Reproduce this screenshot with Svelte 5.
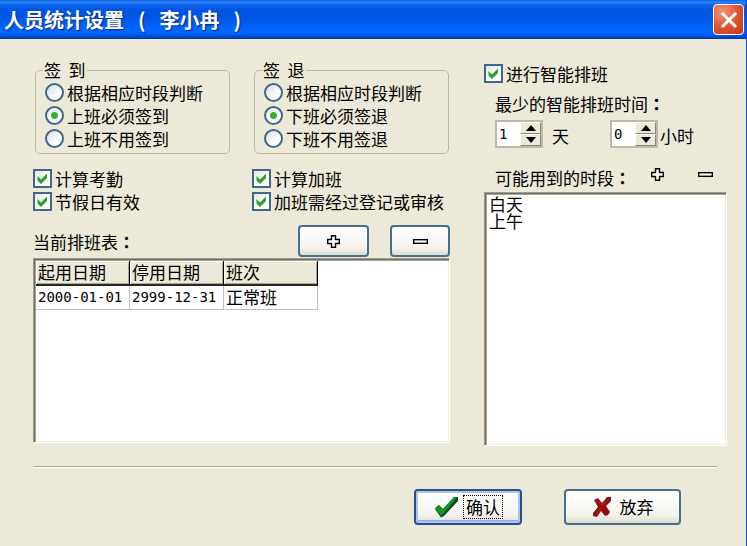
<script lang="ts">
  type Shift = { start: string; end: string; name: string };

  const IN_OPTIONS = ['根据相应时段判断', '上班必须签到', '上班不用签到'];
  const OUT_OPTIONS = ['根据相应时段判断', '下班必须签退', '下班不用签退'];
  const PERIODS = ['白天', '上午'];

  let person = '李小冉';
  let signIn = $state(1);
  let signOut = $state(1);
  let smart = $state(true);
  let days = $state(1);
  let hours = $state(0);

  let flags = $state([
    { label: '计算考勤', on: true },
    { label: '计算加班', on: true },
    { label: '节假日有效', on: true },
    { label: '加班需经过登记或审核', on: true },
  ]);

  let shifts: Shift[] = $state([{ start: '2000-01-01', end: '2999-12-31', name: '正常班' }]);

  function addShift() {
    shifts.push({ start: '2000-01-01', end: '2999-12-31', name: '正常班' });
  }

  function removeShift() {
    shifts.pop();
  }
</script>

{#snippet tick()}
  <svg class="tick" viewBox="0 0 19 19" aria-hidden="true">
    <path d="M4.5 7 L8 10.5 L14 4.5 V9 L8 15 L4.5 11.5 Z" fill="#2ba12b" />
  </svg>
{/snippet}

{#snippet plus()}
  <svg width="13" height="13" viewBox="0 0 13 13" aria-hidden="true">
    <path d="M4.5 .7 H8.5 V4.5 H12.3 V8.5 H8.5 V12.3 H4.5 V8.5 H.7 V4.5 H4.5 Z" fill="#fff" stroke="#000" stroke-width="1.4" />
  </svg>
{/snippet}

{#snippet minus()}
  <svg width="15" height="13" viewBox="0 0 15 13" aria-hidden="true">
    <rect x=".7" y="4.7" width="13.6" height="3.6" fill="#fff" stroke="#000" stroke-width="1.4" />
  </svg>
{/snippet}

<div class="window">
  <header class="titlebar">
    <h1><span>人员统计设置</span><span>(</span><span>{person}</span><span>)</span></h1>
    <button class="close" type="button" aria-label="关闭">
      <svg width="18" height="18" viewBox="0 0 18 18" aria-hidden="true">
        <path d="M2 2 L16 16 M16 2 L2 16" stroke="#fff" stroke-width="3" />
      </svg>
    </button>
  </header>

  <form class="body">
    <div class="columns">
      <div class="left">
        <div class="pair">
          <fieldset>
            <legend>签  到</legend>
            {#each IN_OPTIONS as text, i}
              <label class="choice"><input type="radio" name="in" value={i} bind:group={signIn} />{text}</label>
            {/each}
          </fieldset>
          <fieldset>
            <legend>签  退</legend>
            {#each OUT_OPTIONS as text, i}
              <label class="choice"><input type="radio" name="out" value={i} bind:group={signOut} />{text}</label>
            {/each}
          </fieldset>
        </div>

        <div class="pair flags">
          {#each flags as flag}
            <label class="choice check">
              <span class="box"><input type="checkbox" bind:checked={flag.on} />{@render tick()}</span>
              {flag.label}
            </label>
          {/each}
        </div>

        <div class="table-head">
          <span class="caption">当前排班表<span class="colon">：</span></span>
          <button class="btn add" type="button" aria-label="添加" onclick={addShift}>{@render plus()}</button>
          <button class="btn remove" type="button" aria-label="删除" onclick={removeShift}>{@render minus()}</button>
        </div>

        <div class="sunken pane">
          <table>
            <thead>
              <tr><th>起用日期</th><th>停用日期</th><th>班次</th></tr>
            </thead>
            <tbody>
              {#each shifts as s}
                <tr>
                  <td class="date">{s.start}</td>
                  <td class="date">{s.end}</td>
                  <td>{s.name}</td>
                </tr>
              {/each}
            </tbody>
          </table>
        </div>
      </div>

      <div class="right">
        <label class="choice check">
          <span class="box"><input type="checkbox" bind:checked={smart} />{@render tick()}</span>
          进行智能排班
        </label>
        <div class="caption min-time">最少的智能排班时间<span class="colon">：</span></div>

        <div class="times">
          <div class="spin">
            <input id="days" type="number" min="0" bind:value={days} />
            <span class="arrows">
              <button type="button" aria-label="增加天" onclick={() => days++}><i class="up"></i></button>
              <button type="button" aria-label="减少天" onclick={() => days--}><i class="down"></i></button>
            </span>
          </div>
          <label class="unit day-unit" for="days">天</label>
          <div class="spin">
            <input id="hours" type="number" min="0" bind:value={hours} />
            <span class="arrows">
              <button type="button" aria-label="增加小时" onclick={() => hours++}><i class="up"></i></button>
              <button type="button" aria-label="减少小时" onclick={() => hours--}><i class="down"></i></button>
            </span>
          </div>
          <label class="unit" for="hours">小时</label>
        </div>

        <div class="period-head">
          <label class="caption" for="periods">可能用到的时段<span class="colon">：</span></label>
          <span class="tools">
            <button class="flat" type="button" aria-label="添加时段">{@render plus()}</button>
            <button class="flat" type="button" aria-label="删除时段">{@render minus()}</button>
          </span>
        </div>
        <select id="periods" class="sunken list" size="14">
          {#each PERIODS as p}
            <option>{p}</option>
          {/each}
        </select>
      </div>
    </div>

    <hr />

    <div class="actions">
      <button class="btn ok" type="button">
        <svg width="26" height="24" viewBox="0 0 26 24" aria-hidden="true">
          <path d="M2 14 L6 10 L10 14 L21 2 H25 V6 L11 21 L8 22.5 Z" fill="#0b4a30" />
          <path d="M2 13 L5.5 10 L9.5 14.5 L21 2 L24 2.5 L10.5 18.5 L8 20.5 Z" fill="#12981c" />
        </svg>
        <span class="focus">确认</span>
      </button>
      <button class="btn cancel" type="button">
        <svg width="20" height="22" viewBox="0 0 20 22" aria-hidden="true">
          <path d="M2 4 L6 2 L10 7 L15 1 L19 1 V5 L14 10 L18 16 L16 19 L13 20 L9 15 L5 21 L1 20 L1 17 L6 11 Z" fill="#8e1010" />
          <path d="M4 4.5 L10 9 L16.5 3 M4 18 L9 12" fill="none" stroke="#a82020" stroke-width="1.2" />
        </svg>
        <span>放弃</span>
      </button>
    </div>
  </form>
</div>

<style>
  :global(body) { margin: 0; background: #ece9d8; }

  .window {
    box-sizing: border-box;
    min-height: 100vh;
    border-right: 1px solid #0a45d0;
    background: #ece9d8;
    color: #000;
    font-family: "Noto Sans CJK SC", sans-serif;
    font-size: 17px;
    line-height: 18px;
  }

  button, input, select { font: inherit; color: inherit; margin: 0; box-sizing: border-box; }
  button { padding: 0; }
  svg { display: block; flex-shrink: 0; }

  /* title bar */
  .titlebar {
    display: flex;
    align-items: center;
    justify-content: space-between;
    height: 39px;
    padding: 0 2px 0 4px;
    box-sizing: border-box;
    background: linear-gradient(#0a5be0 0, #2a86f8 2px, #0c62ea 5px, #0054e3 10px, #0056e6 18px, #0065fb 28px, #0066ff 33px, #0050d8 36px, #0038a8 39px);
  }

  h1 {
    display: flex;
    gap: 14px;
    margin: 0;
    color: #fff;
    font-size: 20px;
    line-height: 24px;
    font-weight: 700;
    text-shadow: 1px 1px 1px #0a2a80;
  }

  .close {
    display: grid;
    place-items: center;
    width: 31px;
    height: 31px;
    border: 1px solid #fff;
    border-radius: 4px;
    background: radial-gradient(circle at 30% 25%, #f0937a, #dc5030 55%, #c23a14);
  }

  /* layout */
  .body { padding: 22px 19px 21px 33px; }
  .columns { display: grid; grid-template-columns: minmax(0, 1fr) 243px; gap: 34px; align-items: start; }
  .pair { display: grid; grid-template-columns: 1fr 1fr; column-gap: 21px; }
  .left, .right { display: flex; flex-direction: column; }

  fieldset {
    min-width: 0;
    margin: 0 1px 0 2px;
    padding: 2px 0 3px 9px;
    border: 1px solid #bab7a5;
    border-radius: 5px;
  }

  legend { margin-left: -2px; padding: 0 1px; white-space: pre; }

  .choice { display: flex; align-items: center; gap: 3px; height: 23px; white-space: nowrap; }

  input[type="radio"] {
    appearance: none;
    width: 19px;
    height: 19px;
    border: 2px solid #41688c;
    border-radius: 50%;
    background: linear-gradient(135deg, #d9dce2, #fff 70%);
  }

  input[type="radio"]:checked {
    background: radial-gradient(circle, #35b035 0, #35b035 3px, transparent 4px), linear-gradient(135deg, #e4e6ea, #fff 70%);
  }

  .box { display: grid; width: 19px; height: 19px; }

  .box input {
    appearance: none;
    grid-area: 1 / 1;
    width: 19px;
    height: 19px;
    border: 2px solid #41688c;
    background: linear-gradient(135deg, #e6e6e2, #fff 70%);
  }

  .tick { grid-area: 1 / 1; width: 19px; height: 19px; pointer-events: none; }
  .box input:not(:checked) + :global(.tick) { visibility: hidden; }

  .flags { margin-top: 13px; }
  .colon { font-family: "Noto Sans CJK TC", sans-serif; font-weight: 700; }
  .caption { white-space: nowrap; }

  /* schedule table */
  .table-head { display: flex; align-items: center; margin-top: 12px; }
  .table-head .caption { flex: 1; padding-top: 2px; }

  .btn {
    display: flex;
    align-items: center;
    justify-content: center;
    border: 2px solid #48708e;
    border-radius: 4px;
    background: linear-gradient(#fff, #f4f3ee 75%, #dedbd0);
  }

  .add { width: 71px; height: 32px; margin-right: 21px; }
  .remove { width: 60px; height: 32px; }

  .sunken {
    box-sizing: border-box;
    border: 1px solid;
    border-color: #9d9b8d #fff #fff #9d9b8d;
    background: #fff;
    box-shadow: inset 1px 1px #716f64, inset 2px 2px #a5a397, inset -1px -1px #f1efe2;
  }

  .pane { min-height: 185px; margin-top: 1px; padding: 2px; overflow: auto; }

  table { border-collapse: separate; border-spacing: 0; table-layout: fixed; width: 282px; }

  th, td { box-sizing: border-box; padding: 0 0 2px 2px; text-align: left; font-weight: 400; white-space: nowrap; }

  th {
    height: 25px;
    border-right: 1px solid #000;
    border-bottom: 2px solid #2a2820;
    background: #ece9d8;
    box-shadow: inset 1px 1px #fff, inset -1px -1px #aca899;
  }

  td { height: 24px; border-right: 1px solid #c0c0c0; border-bottom: 1px solid #c0c0c0; }
  .date { font-family: "DejaVu Sans Mono", monospace; font-size: 14px; }

  /* smart scheduling */
  .right .check { margin-top: 1px; }
  .min-time { margin: 10px 0 7px 11px; }
  .times { display: flex; margin-left: 11px; }

  .spin {
    display: flex;
    box-sizing: border-box;
    width: 48px;
    height: 28px;
    border: 2px solid #bcb9aa;
    background: #fff;
  }

  .spin input {
    appearance: textfield;
    width: 23px;
    padding: 0 0 0 2px;
    border: 0;
    outline: 0;
    background: none;
    font-family: "DejaVu Sans Mono", monospace;
    font-size: 14px;
  }

  .spin input::-webkit-inner-spin-button { appearance: none; }

  .arrows { display: flex; flex: 1; flex-direction: column; }

  .arrows button {
    display: grid;
    place-items: center;
    flex: 1;
    border: 1px solid;
    border-color: #fff #8a8778 #8a8778 #fff;
    background: #ece9d8;
  }

  .up, .down { width: 0; height: 0; border: 5px solid transparent; }
  .up { border-top: 0; border-bottom: 6px solid #000; }
  .down { border-bottom: 0; border-top: 6px solid #000; }

  .unit { padding: 7px 0 0 2px; }
  .day-unit { width: 67px; box-sizing: border-box; padding-left: 9px; }

  .period-head {
    display: flex;
    align-items: center;
    justify-content: space-between;
    height: 18px;
    margin: 21px 14px 5px 11px;
  }

  .tools { display: flex; gap: 34px; }
  .flat { border: 0; background: none; height: 24px; padding-bottom: 8px; }

  .list {
    width: 100%;
    height: 254px;
    padding: 2px;
    border-radius: 0;
    outline: 0;
    overflow: hidden;
  }

  option { display: flex; align-items: center; min-height: 17px; height: 17px; padding: 0 0 0 2px; }

  /* footer */
  hr { margin: 20px 10px 21px 0; border: 0; border-top: 1px solid #aca899; border-bottom: 1px solid #fff; }

  .actions { display: flex; justify-content: flex-end; gap: 42px; padding-right: 46px; }
  .actions .btn { height: 36px; }
  .actions .ok { width: 108px; gap: 4px; border-color: #2c4f88; box-shadow: inset 0 0 0 2px #a9c4f2, inset 0 -3px #88a8e4; }
  .cancel { width: 117px; gap: 8px; }
  .focus { padding: 2px; border: 1px dotted #000; }
</style>
